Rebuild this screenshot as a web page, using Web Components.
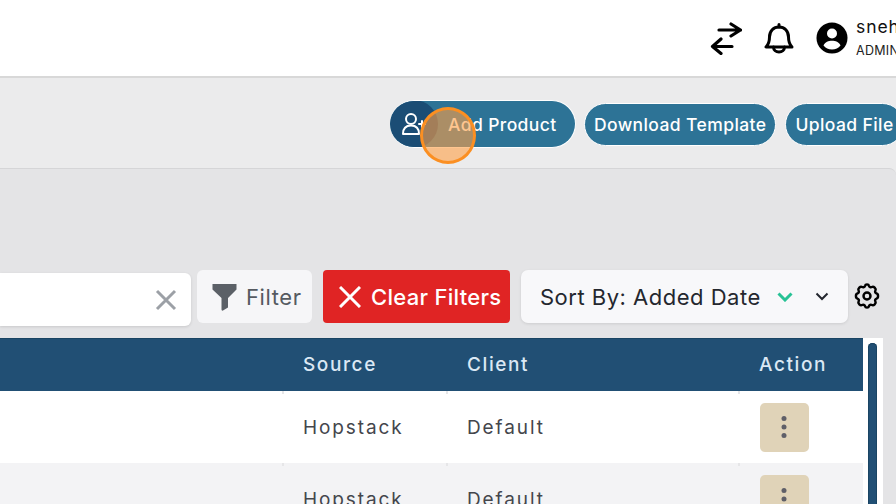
<!DOCTYPE html>
<html>
<head>
<meta charset="utf-8">
<style>
  html, body { margin: 0; padding: 0; }
  body { width: 896px; height: 504px; overflow: hidden; background: #ebebec; font-family: Inter, "Open Sans", sans-serif; }
</style>
</head>
<body>
<app-shell>
  <top-bar></top-bar>
  <action-bar></action-bar>
  <filter-bar></filter-bar>
  <product-table></product-table>
</app-shell>
<click-marker></click-marker>

<script>
class AppShell extends HTMLElement {
  connectedCallback() {
    this.attachShadow({ mode: 'open' });
    this.shadowRoot.innerHTML = `
      <style>
        :host { display: flex; flex-direction: column; width: 896px; height: 504px; overflow: hidden; }
      </style>
      <slot></slot>
    `;
  }
}
customElements.define('app-shell', AppShell);

class TopBar extends HTMLElement {
  connectedCallback() {
    this.attachShadow({ mode: 'open' });
    this.shadowRoot.innerHTML = `
      <style>
        :host {
          display: flex;
          flex: none;
          height: 76px;
          background: #fff;
          border-bottom: 2px solid #d8d8d8;
          justify-content: flex-end;
          align-items: center;
          overflow: hidden;
        }
        .icons { display: flex; align-items: center; width: 186px; flex: none; }
        svg { display: block; flex: none; }
        .swap { margin-right: 22px; }
        .bell { margin-right: 22px; }
        .user { margin-left: 8px; white-space: nowrap; color: #111; }
        .name { font-size: 17.5px; line-height: 20px; letter-spacing: 0.9px; }
        .role { font-size: 12.500px; line-height: 16px; margin-top: 6px; letter-spacing: 0.3px; color: #222; }
      </style>
      <div class="icons">
        <svg class="swap" width="32" height="34" viewBox="0 0 32 34" fill="none" stroke="#000" stroke-width="3.200" stroke-linecap="round" stroke-linejoin="round">
          <path d="M9 9H30.500M21 3L30.500 9L21 15"/>
          <path d="M22 25.500H2.500M11 18L2.500 25.500L11 32.500"/>
        </svg>
        <svg class="bell" width="30" height="32" viewBox="0 0 30 32" fill="none" stroke="#000" stroke-width="3" stroke-linecap="round" stroke-linejoin="round">
          <path d="M2 25H28C25.500 22.500 24.500 20 24.500 15C24.500 9 20.500 5 15 5C9.500 5 5.500 9 5.500 15C5.500 20 4.500 22.500 2 25Z"/>
          <path d="M15 2.500V5M9.500 25C9.500 28 12 30 15 30C18 30 20.500 28 20.500 25"/>
        </svg>
        <svg width="32" height="32" viewBox="0 0 32 32">
          <circle cx="16" cy="16" r="15.500" fill="#000"/>
          <circle cx="16" cy="11.500" r="5" fill="#fff"/>
          <path d="M7.500 23.500C9 20 12.500 18.800 16 18.800C19.500 18.800 23 20 24.500 23.500C22.500 26 19.500 27.500 16 27.500C12.500 27.500 9.500 26 7.500 23.500Z" fill="#fff"/>
        </svg>
        <div class="user">
          <div class="name">sneha</div>
          <div class="role">ADMIN</div>
        </div>
      </div>
    `;
  }
}
customElements.define('top-bar', TopBar);

class PillButton extends HTMLElement {
  connectedCallback() {
    this.attachShadow({ mode: 'open' });
    this.shadowRoot.innerHTML = `
      <style>
        :host {
          display: inline-flex;
          flex: none;
          align-items: center;
          height: 43px;
          box-sizing: border-box;
          padding: 0 9px 0 9px;
          border-radius: 22px;
          background: #2d7396;
          border: 1px solid #fff;
          color: #fff;
          font-size: 17.500px;
          letter-spacing: 0.4px;
          font-weight: 500;
          white-space: nowrap;
        }
      </style>
      <slot></slot>
    `;
  }
}
customElements.define('pill-button', PillButton);

class ActionBar extends HTMLElement {
  connectedCallback() {
    this.attachShadow({ mode: 'open' });
    this.shadowRoot.innerHTML = `
      <style>
        :host {
          display: flex;
          flex: none;
          height: 90px;
          box-sizing: border-box;
          background: #ebebec;
          padding-top: 22px;
          padding-left: 390px;
          gap: 9px;
          overflow: hidden;
        }
        .add {
          display: flex;
          flex: none;
          align-items: center;
          width: 186px;
          height: 48px;
          box-sizing: border-box;
          border-radius: 24px;
          background: #2d7396;
          border: 1px solid #fff;
          border-left: 0;
          color: #fff;
          font-size: 17.500px;
          letter-spacing: 0.4px;
          font-weight: 500;
          white-space: nowrap;
          overflow: hidden;
        }
        .badge {
          display: flex;
          flex: none;
          width: 48px;
          height: 48px;
          border-radius: 50%;
          background: #1b4d75;
          align-items: center;
          justify-content: center;
          margin-right: 10px;
        }
        .rest { display: flex; gap: 9px; padding-top: 3px; margin-left: -1px; }
      </style>
      <div class="add">
        <div class="badge">
          <svg width="26" height="26" viewBox="0 0 26 26" fill="none" stroke="#fff" stroke-width="2" stroke-linecap="round" stroke-linejoin="round">
            <circle cx="10" cy="8" r="5"/>
            <path d="M2 23C2 17 5 14.500 10 14.500C15 14.500 18 17 18 23Z"/>
            <path d="M18 13H24M21 10V16"/>
          </svg>
        </div>
        <span>Add Product</span>
      </div>
      <div class="rest">
        <pill-button>Download Template</pill-button>
        <pill-button>Upload File</pill-button>
      </div>
    `;
  }
}
customElements.define('action-bar', ActionBar);

class FilterBar extends HTMLElement {
  connectedCallback() {
    this.attachShadow({ mode: 'open' });
    this.shadowRoot.innerHTML = `
      <style>
        :host {
          display: flex;
          flex: none;
          height: 170px;
          box-sizing: border-box;
          background: #e4e4e6;
          border-top: 1px solid #d5d5d7;
          border-top-right-radius: 7px;
          padding-top: 101px;
          align-items: flex-start;
          font-size: 22px;
        }
        .search {
          flex: none;
          width: 191px;
          height: 53px;
          margin-top: 3px;
          box-sizing: border-box;
          background: #fff;
          border-radius: 0 6px 6px 0;
          box-shadow: 0 1px 3px rgba(0,0,0,.12);
          display: flex;
          align-items: center;
          justify-content: flex-end;
          padding-right: 14px;
        }
        .filter {
          flex: none;
          width: 115px;
          height: 53px;
          margin-left: 6px;
          box-sizing: border-box;
          background: #f6f6f8;
          border-radius: 6px;
          display: flex;
          align-items: center;
          padding-left: 15px;
          gap: 9px;
          color: #555a61;
          letter-spacing: 0.6px;
        }
        .clear {
          flex: none;
          width: 187px;
          height: 53px;
          box-sizing: border-box;
          margin-left: 11px;
          background: #e02424;
          border-radius: 4px;
          display: flex;
          align-items: center;
          padding-left: 16px;
          gap: 10px;
          color: #fff;
          font-weight: 500;
          letter-spacing: 0.3px;
        }
        .sort {
          flex: none;
          width: 327px;
          height: 53px;
          box-sizing: border-box;
          margin-left: 11px;
          background: #f8f8fa;
          border-radius: 7px;
          box-shadow: 0 1px 3px rgba(0,0,0,.1);
          display: flex;
          align-items: center;
          padding-left: 19px;
          color: #24272e;
          white-space: nowrap;
          letter-spacing: 0.5px;
        }
        .label { width: 237px; flex: none; }
        .chev { margin-left: 22px; }
        .gear { flex: none; margin-left: 5px; margin-top: 12px; }
        svg { display: block; flex: none; }
      </style>
      <div class="search">
        <svg width="22" height="22" viewBox="0 0 22 22" fill="none" stroke="#9ca0a6" stroke-width="3">
          <path d="M2 2L20 20M20 2L2 20"/>
        </svg>
      </div>
      <div class="filter">
        <svg width="25" height="28" viewBox="0 0 25 28" fill="#5b6067">
          <path d="M0.500 1H24.500V6.500L16 15V24.500L11 27.500Q9.500 28 9.500 26.500V15L0.500 6.500Z"/>
        </svg>
        <span>Filter</span>
      </div>
      <div class="clear">
        <svg width="22" height="22" viewBox="0 0 22 22" fill="none" stroke="#fff" stroke-width="3">
          <path d="M1 1L21 21M21 1L1 21"/>
        </svg>
        <span>Clear Filters</span>
      </div>
      <div class="sort">
        <span class="label">Sort By: Added Date</span>
        <svg width="16" height="10" viewBox="0 0 16 10" fill="none" stroke="#27c295" stroke-width="3">
          <path d="M1.500 1.500L8 8L14.500 1.500"/>
        </svg>
        <svg class="chev" width="14" height="9" viewBox="0 0 14 9" fill="none" stroke="#24272e" stroke-width="2">
          <path d="M1.500 1.500L7 7L12.500 1.500"/>
        </svg>
      </div>
      <svg class="gear" width="28" height="28" viewBox="0 0 24 24" fill="none" stroke="#000" stroke-width="2.100" stroke-linecap="round" stroke-linejoin="round">
        <path d="M10.300 3.300C10.700 1.600 13.300 1.600 13.700 3.300C14 4.400 15.200 4.900 16.200 4.300C17.700 3.400 20.100 5.800 19.200 7.300C18.600 8.300 19.100 9.500 20.200 9.800C21.900 10.200 21.900 13.800 20.200 14.200C19.100 14.500 18.600 15.700 19.200 16.700C20.100 18.200 17.700 20.600 16.200 19.700C15.200 19.100 14 19.600 13.700 20.700C13.300 22.400 10.700 22.400 10.300 20.700C10 19.600 8.800 19.100 7.800 19.700C6.300 20.600 3.900 18.200 4.800 16.700C5.400 15.700 4.900 14.500 3.800 14.200C2.100 13.800 2.100 10.200 3.800 9.800C4.900 9.500 5.400 8.300 4.800 7.300C3.900 5.800 6.300 3.400 7.800 4.300C8.800 4.900 10 4.400 10.300 3.300Z"/>
        <circle cx="12" cy="12" r="3"/>
      </svg>
    `;
  }
}
customElements.define('filter-bar', FilterBar);

class ProductRow extends HTMLElement {
  connectedCallback() {
    this.attachShadow({ mode: 'open' });
    this.shadowRoot.innerHTML = `
      <style>
        :host {
          display: grid;
          grid-template-columns: 467px 293px 103px;
          height: 72px;
          align-items: center;
          font-size: 19px;
          letter-spacing: 1.900px;
          color: #44464c;
          background-color: #fff;
          background-image: linear-gradient(#e6e6e8, #e6e6e8), linear-gradient(#e6e6e8, #e6e6e8), linear-gradient(#e6e6e8, #e6e6e8);
          background-size: 2px 3px;
          background-position: 282px 0, 446px 0, 738px 0;
          background-repeat: no-repeat;
        }
        :host([alt]) { background-color: #f3f3f5; }
        .source { padding-left: 303px; }
        .cell { white-space: nowrap; }
        .btn {
          width: 49px;
          height: 49px;
          border-radius: 5px;
          background: #e0d3b8;
          display: flex;
          align-items: center;
          justify-content: center;
        }
        .btn svg { margin-right: 1px; }
      </style>
      <div class="cell source">${this.getAttribute('source')}</div>
      <div class="cell">${this.getAttribute('client')}</div>
      <div class="btn">
        <svg width="6" height="22" viewBox="0 0 6 22" fill="#5f5f68">
          <circle cx="3" cy="2.500" r="2.500"/><circle cx="3" cy="11" r="2.500"/><circle cx="3" cy="19.500" r="2.500"/>
        </svg>
      </div>
    `;
  }
}
customElements.define('product-row', ProductRow);

class ProductTable extends HTMLElement {
  connectedCallback() {
    this.attachShadow({ mode: 'open' });
    this.shadowRoot.innerHTML = `
      <style>
        :host { display: flex; flex: none; height: 166px; overflow: hidden; background: #e4e4e6; }
        .table { flex: none; width: 863px; }
        .head {
          display: grid;
          grid-template-columns: 467px 292px 104px;
          height: 53px;
          align-items: center;
          background: #214f74;
          color: #dbe8f4;
          font-size: 19px;
          font-weight: 500;
          letter-spacing: 1.600px;
          box-shadow: inset 0 1px 0 #1a4463;
        }
        .source { padding-left: 303px; }
        .track {
          flex: none;
          width: 20px;
          background: #fff;
          box-sizing: border-box;
          padding: 5px 0 0 5px;
        }
        .thumb { width: 9px; height: 200px; background: #214f74; border-radius: 5px; box-shadow: 0 0 0 1px #1a4463 inset; }
      </style>
      <div class="table">
        <div class="head">
          <div class="source">Source</div>
          <div>Client</div>
          <div>Action</div>
        </div>
        <product-row source="Hopstack" client="Default"></product-row>
        <product-row alt source="Hopstack" client="Default"></product-row>
      </div>
      <div class="track"><div class="thumb"></div></div>
    `;
  }
}
customElements.define('product-table', ProductTable);

class ClickMarker extends HTMLElement {
  connectedCallback() {
    this.attachShadow({ mode: 'open' });
    this.shadowRoot.innerHTML = `
      <style>
        :host {
          position: absolute;
          left: 420px;
          top: 107px;
          width: 56px;
          height: 57px;
          box-sizing: border-box;
          border-radius: 50%;
          border: 3px solid #fb8f22;
          background: rgba(255, 160, 70, 0.6);
        }
      </style>
    `;
  }
}
customElements.define('click-marker', ClickMarker);
</script>
</body>
</html>
